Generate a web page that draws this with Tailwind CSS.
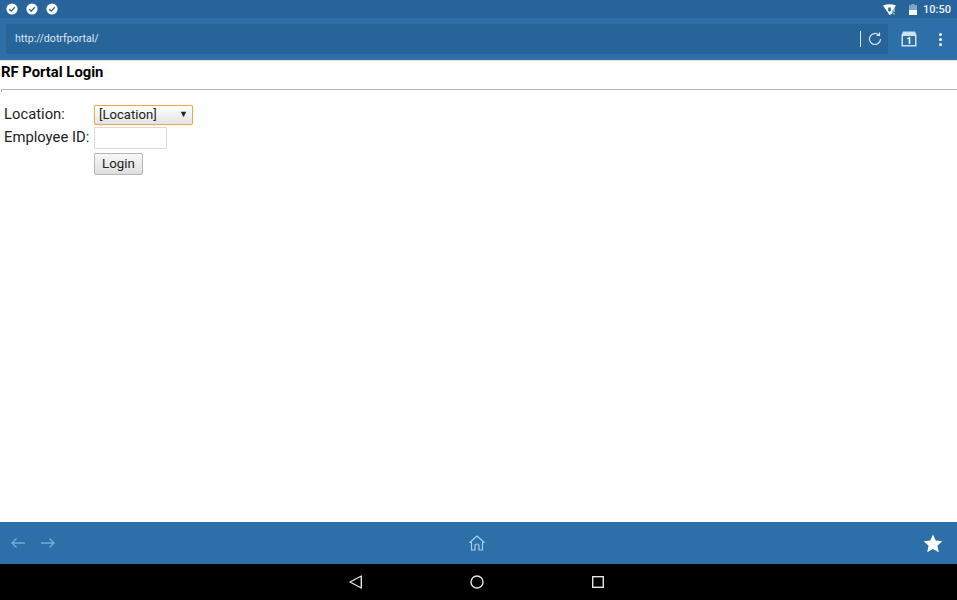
<!DOCTYPE html>
<html>
<head>
<meta charset="utf-8">
<script src="https://cdn.jsdelivr.net/npm/@tailwindcss/browser@4"></script>
</head>
<body class="w-[957px] h-[600px] overflow-hidden bg-white font-['Roboto',sans-serif] flex flex-col">
  <div class="h-[18px] bg-[#27649a] flex items-center pl-[6px] pr-[6px] text-white shrink-0">
    <div class="flex gap-[8px]">
      <svg class="w-[12px] h-[12px]" viewBox="0 0 12 12"><circle cx="6" cy="6" r="5.6" fill="#fff"/><path d="M3.2 6.2 5.2 8.1 8.8 4.2" fill="none" stroke="#27649a" stroke-width="1.4"/></svg>
      <svg class="w-[12px] h-[12px]" viewBox="0 0 12 12"><circle cx="6" cy="6" r="5.6" fill="#fff"/><path d="M3.2 6.2 5.2 8.1 8.8 4.2" fill="none" stroke="#27649a" stroke-width="1.4"/></svg>
      <svg class="w-[12px] h-[12px]" viewBox="0 0 12 12"><circle cx="6" cy="6" r="5.6" fill="#fff"/><path d="M3.2 6.2 5.2 8.1 8.8 4.2" fill="none" stroke="#27649a" stroke-width="1.4"/></svg>
    </div>
    <div class="ml-auto flex items-center">
      <svg class="w-[13px] h-[11px]" viewBox="0 0 13 11"><path d="M0 1.500Q6.500-1 13 1.500L9.500 6.500V9.500L6.500 11 0 1.500Z" fill="#fff"/><path d="M5.200 3.500H7.800L7.800 6.500 6.500 8 5.200 6.500Z" fill="#27649a"/><path d="M11 4V8M11 9V10.500" stroke="#eef4f9" stroke-width="1"/></svg>
      <svg class="w-[8px] h-[11px] ml-[13px]" viewBox="0 0 8 11"><path d="M2.500 0H5.500V1H8V11H0V1H2.500Z" fill="#7fa5c6"/><path d="M0 6H8V11H0Z" fill="#fff"/></svg>
      <span class="ml-[6px] text-[11px] leading-[18px] font-medium text-[#eef4f9] relative top-px">10:50</span>
    </div>
  </div>
  <div class="h-[42px] bg-[#2d6fa8] flex items-center pl-[6px] shrink-0">
    <div class="w-[882px] h-[30px] bg-[#27649a] flex items-center pl-[9px] pr-[6px]">
      <span class="text-[10.6px] text-[#dbe7f1]">http://dotrfportal/</span>
      <span class="ml-auto w-px h-[16px] bg-[#dbe7f1]"></span>
      <svg class="w-[14px] h-[14px] ml-[7px]" viewBox="0 0 14 14" fill="none" stroke="#dbe7f1" stroke-width="1.2"><path d="M12.500 7A5.500 5.500 0 1 1 10.800 3"/><path d="M11.500 0.500V3.500H8.500"/></svg>
    </div>
    <svg class="w-[16px] h-[16px] ml-[13px]" viewBox="0 0 16 16"><path d="M2 0.500H14L15.500 4V15.500H0.500V4Z" fill="#cfe0ee"/><rect x="2" y="5" width="12" height="9" fill="#2d6fa8"/><text x="8" y="13" text-anchor="middle" font-size="9" font-weight="700" font-family="Roboto" fill="#fff">1</text></svg>
    <div class="ml-[22px] flex flex-col gap-[2px]">
      <span class="w-[3px] h-[3px] rounded-full bg-white"></span>
      <span class="w-[3px] h-[3px] rounded-full bg-white"></span>
      <span class="w-[3px] h-[3px] rounded-full bg-white"></span>
    </div>
  </div>
  <div class="flex-1 relative text-black">
    <div class="h-[1px] bg-[#efe6dc]"></div>
    <h1 class="pl-px pt-[3px] text-[14.8px] leading-[17px] font-bold">RF Portal Login</h1>
    <div class="ml-px mt-[8px] h-[3px] border-t border-l border-[#b8b8b8]"></div>
    <div class="mt-[13px] pl-[4px] grid grid-cols-[90px_auto] justify-start text-[14.8px] text-[#222]">
      <div class="h-[21px] leading-[19px]">Location:</div>
      <div class="w-[99px] h-[20px] border border-[#e9a94f] rounded-[2px] bg-gradient-to-b from-white to-[#e4e4e4] flex items-center pl-[4px] pr-[4px] text-[13.1px] text-[#222] shadow-[0_0_1px_#e9a94f]">
        <span>[Location]</span><span class="ml-auto text-[9px]">▼</span>
      </div>
      <div class="h-[25px] leading-[23px]">Employee ID:</div>
      <div class="w-[73px] h-[22px] mt-[1px] border border-[#dcdcdc] bg-white"></div>
      <div></div>
      <div class="w-[49px] h-[22px] mt-[2px] border border-[#b5b5b5] rounded-[2px] bg-gradient-to-b from-[#f8f8f8] to-[#dedede] flex items-center justify-center text-[13.3px] text-[#222]">Login</div>
    </div>
  </div>
  <div class="h-[42px] bg-[#2d6fa8] flex items-center pl-[10px] pr-[14px] shrink-0">
    <svg class="w-[16px] h-[12px]" viewBox="0 0 16 12" fill="none" stroke="#78aad6" stroke-width="1.300"><path d="M15 6H2M6.500 1.500 2 6l4.500 4.500"/></svg>
    <svg class="w-[16px] h-[12px] ml-[14px]" viewBox="0 0 16 12" fill="none" stroke="#78aad6" stroke-width="1.300"><path d="M1 6H14M9.500 1.500 14 6l-4.500 4.500"/></svg>
    <svg class="w-[16px] h-[16px] ml-[413px]" viewBox="0 0 16 16" fill="none" stroke="#a6d0f2" stroke-width="1.200" stroke-linejoin="round"><path d="M0.800 7.500 8 1l7.200 6.500H13.500V15H10V11Q10 9 8 9T6 11V15H2.500V7.500Z"/></svg>
    <svg class="w-[20px] h-[19px] ml-auto" viewBox="0 0 20 19"><path d="M10 0.500 12.700 6.600 19.300 7.300 14.400 11.700 15.800 18.200 10 14.900 4.200 18.200 5.600 11.700 0.700 7.300 7.300 6.600Z" fill="#fff"/></svg>
  </div>
  <div class="h-[36px] bg-black flex items-center relative shrink-0">
    <svg class="w-[14px] h-[14px] ml-[349px]" viewBox="0 0 14 14" fill="none" stroke="#e4e4e4" stroke-width="1.400" stroke-linejoin="round"><path d="M12.300 1V13L1 7Z"/></svg>
    <svg class="w-[14px] h-[14px] ml-[107px]" viewBox="0 0 14 14" fill="none" stroke="#e4e4e4" stroke-width="1.400"><circle cx="7" cy="7" r="6"/></svg>
    <svg class="w-[12px] h-[12px] ml-[108px]" viewBox="0 0 12 12" fill="none" stroke="#e4e4e4" stroke-width="1.400"><rect x="0.700" y="0.700" width="10.600" height="10.600"/></svg>
  </div>
</body>
</html>
